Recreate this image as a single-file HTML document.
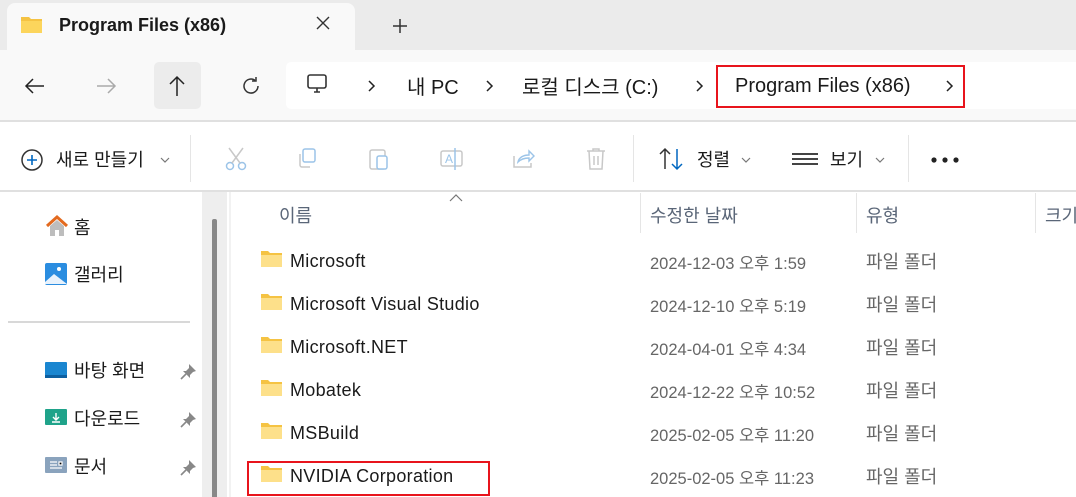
<!DOCTYPE html>
<html><head><meta charset="utf-8"><style>
*{margin:0;padding:0;box-sizing:border-box}
body{width:1076px;height:497px;overflow:hidden;background:#fff;font-family:"Liberation Sans","Noto Sans CJK KR",sans-serif;color:#1a1a1a;position:relative}
.a{position:absolute}
.t{position:absolute;white-space:nowrap;line-height:1.15}
</style></head><body>
<div class="a" style="left:0;top:0;width:1076px;height:50px;background:#ebebeb"></div>
<div class="a" style="left:7px;top:3px;width:348px;height:47px;background:#f9f9f9;border-radius:8px 8px 0 0"></div>
<svg class="a" style="left:20px;top:15px" width="24" height="20"><path d="M1 2h8l2 2h11v14H1z" fill="#f5c343"/><path d="M1 6h21v12H1z" fill="#fcd55c"/></svg>
<div class="t" style="left:59px;top:15px;font-size:18px;font-weight:bold">Program Files (x86)</div>
<svg class="a" style="left:316px;top:16px" width="14" height="14"><path d="M1 1l12 12M13 1L1 13" stroke="#333" stroke-width="1.4"/></svg>
<svg class="a" style="left:392px;top:18px" width="16" height="16"><path d="M8 1v14M1 8h14" stroke="#333" stroke-width="1.5"/></svg>
<div class="a" style="left:0;top:50px;width:1076px;height:72px;background:#f9f9f9;border-bottom:2px solid #e0e0e0"></div>
<div class="a" style="left:154px;top:62px;width:47px;height:47px;background:#ececec;border-radius:5px"></div>
<svg class="a" style="left:24px;top:77px" width="22" height="18"><path d="M20 9H2M9 2L2 9l7 7" fill="none" stroke="#222" stroke-width="1.5"/></svg>
<svg class="a" style="left:95px;top:77px" width="22" height="18"><path d="M2 9h18M13 2l7 7-7 7" fill="none" stroke="#aaa" stroke-width="1.5"/></svg>
<svg class="a" style="left:168px;top:75px" width="18" height="22"><path d="M9 21V2M2 9l7-7 7 7" fill="none" stroke="#222" stroke-width="1.5"/></svg>
<svg class="a" style="left:240px;top:75px" width="22" height="22"><path d="M18 11a7 7 0 1 1-3-5.7" fill="none" stroke="#333" stroke-width="1.5"/><path d="M16 2v4h-4" fill="none" stroke="#333" stroke-width="1.5"/></svg>
<div class="a" style="left:286px;top:62px;width:790px;height:47px;background:#fff;border-radius:5px 0 0 5px"></div>
<svg class="a" style="left:306px;top:73px" width="22" height="22"><rect x="2" y="2" width="18" height="13" rx="2" fill="none" stroke="#333" stroke-width="1.6"/><path d="M8 19h6M11 15v4" stroke="#333" stroke-width="1.6"/></svg>
<svg class="a" style="left:368px;top:80px" width="8" height="12"><path d="M1 1l5 5-5 5" fill="none" stroke="#222" stroke-width="1.5"/></svg>
<div class="t" style="left:407px;top:77px;font-size:20px">내 PC</div>
<svg class="a" style="left:486px;top:80px" width="8" height="12"><path d="M1 1l5 5-5 5" fill="none" stroke="#222" stroke-width="1.5"/></svg>
<div class="t" style="left:522px;top:77px;font-size:20px">로컬 디스크 (C:)</div>
<svg class="a" style="left:696px;top:80px" width="8" height="12"><path d="M1 1l5 5-5 5" fill="none" stroke="#222" stroke-width="1.5"/></svg>
<div class="a" style="left:716px;top:65px;width:249px;height:43px;border:2px solid #e8141c"></div>
<div class="t" style="left:735px;top:75px;font-size:20px">Program Files (x86)</div>
<svg class="a" style="left:946px;top:80px" width="8" height="12"><path d="M1 1l5 5-5 5" fill="none" stroke="#222" stroke-width="1.5"/></svg>
<!-- command bar -->
<svg class="a" style="left:20px;top:148px" width="24" height="24"><circle cx="12" cy="12" r="10" fill="none" stroke="#333" stroke-width="1.5"/><path d="M12 7v10M7 12h10" stroke="#0067c0" stroke-width="1.6"/></svg>
<div class="t" style="left:56px;top:150px;font-size:18px">새로 만들기</div>
<svg class="a" style="left:160px;top:157px" width="10" height="6"><path d="M1 1l4 4 4-4" fill="none" stroke="#777" stroke-width="1.2"/></svg>
<div class="a" style="left:190px;top:135px;width:1px;height:47px;background:#e5e5e5"></div>
<svg class="a" style="left:224px;top:146px" width="24" height="26"><circle cx="6" cy="20" r="3.5" fill="none" stroke="#9cc4e8" stroke-width="1.5"/><circle cx="18" cy="20" r="3.5" fill="none" stroke="#9cc4e8" stroke-width="1.5"/><path d="M8 17L19 2M16 17L5 2" stroke="#c8c8c8" stroke-width="1.5"/></svg>
<svg class="a" style="left:296px;top:147px" width="24" height="24"><rect x="7" y="2" width="12" height="13" rx="2" fill="none" stroke="#9cc4e8" stroke-width="1.5"/><path d="M4 7v11a2 2 0 0 0 2 2h8" fill="none" stroke="#c8c8c8" stroke-width="1.5"/></svg>
<svg class="a" style="left:368px;top:146px" width="24" height="26"><rect x="2" y="4" width="15" height="19" rx="2" fill="none" stroke="#c8c8c8" stroke-width="1.5"/><rect x="9" y="10" width="10" height="13" rx="2" fill="#fff" stroke="#9cc4e8" stroke-width="1.5"/></svg>
<svg class="a" style="left:439px;top:146px" width="26" height="26"><rect x="2" y="5" width="21" height="15" rx="2" fill="none" stroke="#c8c8c8" stroke-width="1.5"/><text x="6" y="17" font-size="12" fill="#9cc4e8" font-family="Liberation Sans">A</text><path d="M16 2v22" stroke="#9cc4e8" stroke-width="1.5"/></svg>
<svg class="a" style="left:511px;top:147px" width="26" height="24"><path d="M3 9v11h17v-4" fill="none" stroke="#c8c8c8" stroke-width="1.5"/><path d="M7 15c1-5 6-7 11-7V4l5 5-5 5V11c-4 0-8 1-11 4z" fill="none" stroke="#9cc4e8" stroke-width="1.4"/></svg>
<svg class="a" style="left:584px;top:146px" width="24" height="26"><path d="M3 5h18M9 5V3h6v2M5 5l1 18h12l1-18M10 10v9M14 10v9" fill="none" stroke="#c8c8c8" stroke-width="1.5"/></svg>
<div class="a" style="left:633px;top:135px;width:1px;height:47px;background:#e5e5e5"></div>
<svg class="a" style="left:658px;top:147px" width="28" height="24"><path d="M7 22V2M2 7l5-5 5 5" fill="none" stroke="#333" stroke-width="1.5"/><path d="M19 2v20M14 17l5 5 5-5" fill="none" stroke="#0067c0" stroke-width="1.5"/></svg>
<div class="t" style="left:697px;top:150px;font-size:18px">정렬</div>
<svg class="a" style="left:741px;top:157px" width="10" height="6"><path d="M1 1l4 4 4-4" fill="none" stroke="#777" stroke-width="1.2"/></svg>
<div class="a" style="left:792px;top:153px;width:26px;height:2px;background:#444;box-shadow:0 5px #444,0 10px #444"></div>
<div class="t" style="left:830px;top:150px;font-size:18px">보기</div>
<svg class="a" style="left:875px;top:157px" width="10" height="6"><path d="M1 1l4 4 4-4" fill="none" stroke="#777" stroke-width="1.2"/></svg>
<div class="a" style="left:908px;top:135px;width:1px;height:47px;background:#e5e5e5"></div>
<svg class="a" style="left:930px;top:156px" width="30" height="8"><circle cx="4" cy="4" r="2.6" fill="#222"/><circle cx="15" cy="4" r="2.6" fill="#222"/><circle cx="26" cy="4" r="2.6" fill="#222"/></svg>
<div class="a" style="left:0;top:190px;width:1076px;height:2px;background:#e0e0e0"></div>
<!-- sidebar -->
<svg class="a" style="left:44px;top:214px" width="26" height="24"><path d="M3 12L13 3l10 9" fill="none" stroke="#e36a1f" stroke-width="3"/><path d="M6 12v10h5v-6h4v6h5V12l-7-6z" fill="#bdbdbd"/></svg>
<div class="t" style="left:74px;top:218px;font-size:18px">홈</div>
<svg class="a" style="left:44px;top:262px" width="24" height="24"><rect x="1" y="1" width="22" height="22" rx="2" fill="#2b8de0"/><path d="M1 20l9-8 13 10H1z" fill="#e8f2fc"/><circle cx="15" cy="7" r="2" fill="#fff"/></svg>
<div class="t" style="left:74px;top:265px;font-size:18px">갤러리</div>
<div class="a" style="left:8px;top:321px;width:182px;height:2px;background:#d8d8d8"></div>
<svg class="a" style="left:45px;top:361px" width="22" height="18"><rect x="0" y="1" width="22" height="16" rx="1" fill="#1a86d0"/><rect x="0" y="14" width="22" height="3" fill="#0d5fa0"/></svg>
<div class="t" style="left:74px;top:361px;font-size:18px">바탕 화면</div>
<svg class="a" style="left:45px;top:408px" width="22" height="18"><rect x="0" y="1" width="22" height="16" rx="1" fill="#1fa38a"/><path d="M11 5v7M8 9l3 3 3-3M7 14h8" stroke="#fff" stroke-width="1.4" fill="none"/></svg>
<div class="t" style="left:74px;top:409px;font-size:18px">다운로드</div>
<svg class="a" style="left:45px;top:456px" width="22" height="18"><rect x="0" y="1" width="22" height="16" rx="1" fill="#8aa3bd"/><path d="M5 6h7M5 9h7M5 12h12M14 6h3v3h-3z" stroke="#fff" stroke-width="1.2"/></svg>
<div class="t" style="left:74px;top:457px;font-size:18px">문서</div>
<svg class="a" style="left:180px;top:362px" width="18" height="18"><path d="M9 2l7 7-3 1-3 3 0 3-7-7 3 0 3-3z" fill="#888"/><path d="M6 12l-5 5" stroke="#888" stroke-width="1.6"/></svg>
<svg class="a" style="left:180px;top:410px" width="18" height="18"><path d="M9 2l7 7-3 1-3 3 0 3-7-7 3 0 3-3z" fill="#888"/><path d="M6 12l-5 5" stroke="#888" stroke-width="1.6"/></svg>
<svg class="a" style="left:180px;top:458px" width="18" height="18"><path d="M9 2l7 7-3 1-3 3 0 3-7-7 3 0 3-3z" fill="#888"/><path d="M6 12l-5 5" stroke="#888" stroke-width="1.6"/></svg>
<div class="a" style="left:202px;top:192px;width:25px;height:305px;background:#eeeeee"></div>
<div class="a" style="left:212px;top:219px;width:5px;height:278px;background:#888;border-radius:2px 2px 0 0"></div>
<div class="a" style="left:229px;top:192px;width:2px;height:305px;background:#f2f2f2"></div>
<!-- headers -->
<svg class="a" style="left:449px;top:194px" width="14" height="8"><path d="M1 7l6-6 6 6" fill="none" stroke="#777" stroke-width="1.2"/></svg>
<div class="t" style="left:279px;top:206px;font-size:18px;color:#5a6678">이름</div>
<div class="a" style="left:640px;top:193px;width:1px;height:40px;background:#e5e5e5"></div>
<div class="t" style="left:650px;top:206px;font-size:18px;color:#5a6678">수정한 날짜</div>
<div class="a" style="left:856px;top:193px;width:1px;height:40px;background:#e5e5e5"></div>
<div class="t" style="left:866px;top:206px;font-size:18px;color:#5a6678">유형</div>
<div class="a" style="left:1035px;top:193px;width:1px;height:40px;background:#e5e5e5"></div>
<div class="t" style="left:1045px;top:206px;font-size:18px;color:#5a6678">크기</div>
<div class="a" style="left:247px;top:461px;width:243px;height:35px;border:2px solid #e8141c"></div>
<svg class="a" style="left:260px;top:250px" width="24" height="240">
<g id="f"><path d="M1 1h7l2 2h12v14H1z" fill="#f5c343"/><path d="M1 5h21v12H1z" fill="#fde08a"/></g>
<use href="#f" y="43"/><use href="#f" y="86"/><use href="#f" y="129"/><use href="#f" y="172"/><use href="#f" y="215"/>
</svg>
<div class="t" style="left:290px;top:251px;font-size:18px;letter-spacing:0.3px">Microsoft</div>
<div class="t" style="left:290px;top:294px;font-size:18px;letter-spacing:0.3px">Microsoft Visual Studio</div>
<div class="t" style="left:290px;top:337px;font-size:18px;letter-spacing:0.3px">Microsoft.NET</div>
<div class="t" style="left:290px;top:380px;font-size:18px;letter-spacing:0.3px">Mobatek</div>
<div class="t" style="left:290px;top:423px;font-size:18px;letter-spacing:0.3px">MSBuild</div>
<div class="t" style="left:290px;top:466px;font-size:18px;letter-spacing:0.3px">NVIDIA Corporation</div>
<div class="t" style="left:650px;top:255px;font-size:16.5px;color:#666">2024-12-03 오후 1:59</div>
<div class="t" style="left:650px;top:298px;font-size:16.5px;color:#666">2024-12-10 오후 5:19</div>
<div class="t" style="left:650px;top:341px;font-size:16.5px;color:#666">2024-04-01 오후 4:34</div>
<div class="t" style="left:650px;top:384px;font-size:16.5px;color:#666">2024-12-22 오후 10:52</div>
<div class="t" style="left:650px;top:427px;font-size:16.5px;color:#666">2025-02-05 오후 11:20</div>
<div class="t" style="left:650px;top:470px;font-size:16.5px;color:#666">2025-02-05 오후 11:23</div>
<div class="t" style="left:866px;top:252px;font-size:18px;color:#666">파일 폴더</div>
<div class="t" style="left:866px;top:295px;font-size:18px;color:#666">파일 폴더</div>
<div class="t" style="left:866px;top:338px;font-size:18px;color:#666">파일 폴더</div>
<div class="t" style="left:866px;top:381px;font-size:18px;color:#666">파일 폴더</div>
<div class="t" style="left:866px;top:424px;font-size:18px;color:#666">파일 폴더</div>
<div class="t" style="left:866px;top:467px;font-size:18px;color:#666">파일 폴더</div>
</body></html>
